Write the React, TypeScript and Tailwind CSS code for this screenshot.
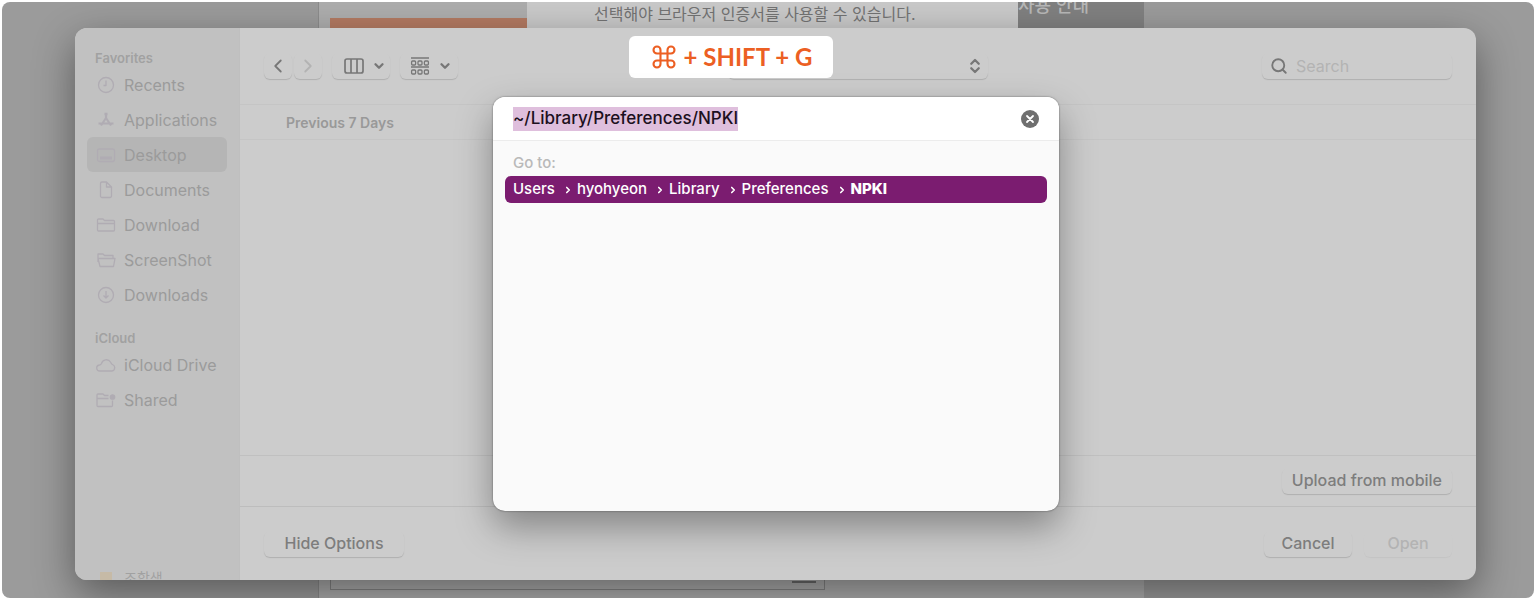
import { useState } from "react";
import type { ReactNode } from "react";
import { ChevronDown, ChevronLeft, ChevronRight, ChevronsUpDown, Search } from "lucide-react";

const FAVORITES = [
  { name: "Recents", icon: "clock" },
  { name: "Applications", icon: "apps" },
  { name: "Desktop", icon: "desktop" },
  { name: "Documents", icon: "document" },
  { name: "Download", icon: "folder" },
  { name: "ScreenShot", icon: "openFolder" },
  { name: "Downloads", icon: "download" },
];

const ICLOUD = [
  { name: "iCloud Drive", icon: "cloud" },
  { name: "Shared", icon: "shared" },
];

const PATH = ["Users", "hyohyeon", "Library", "Preferences", "NPKI"];

const CONTROL = "h-[26px] rounded-md shadow-[0_1px_1px_rgba(0,0,0,0.14)]";

const ICONS: Record<string, ReactNode> = {
  clock: (
    <>
      <circle cx="10" cy="10" r="7.5" />
      <path d="M10 5.5V10.5H7.5" />
    </>
  ),
  apps: (
    <>
      <path d="M10 4v4M10 8L5 15.5M10 8l5 7.5M2.5 13.5h15" strokeWidth="2.2" />
      <path d="M8.5 4h3" strokeWidth="2.5" />
    </>
  ),
  desktop: (
    <>
      <rect x="1.5" y="4" width="17" height="12.5" rx="2" />
      <path d="M4 13h12" strokeWidth="3" />
    </>
  ),
  document: <path d="M4.5 3.5a1.500 1.500 0 011.500-1.500h4.500l5 5v9a1.500 1.500 0 01-1.500 1.500h-8a1.500 1.500 0 01-1.500-1.500zM10.500 2v5h5" />,
  folder: <path d="M1.500 5a1 1 0 011-1h4.500l1.500 1.500h9a1 1 0 011 1v8.500a1 1 0 01-1 1h-15a1 1 0 01-1-1zM1.500 8.500h17" />,
  openFolder: <path d="M2 12V4h5l1.500 1.500h8.500v3M2 8.500h17l-1.500 8h-13.500z" />,
  download: (
    <>
      <circle cx="10" cy="10" r="7.5" />
      <path d="M10 6v7M7.500 10.500L10 13l2.500-2.500" />
    </>
  ),
  cloud: <path d="M4 16a3 3 0 01-.5-6c1-.2 1.500-.5 2-1.500a5 5 0 019-1.500c.7 1 .7 2 2 2.500A3.400 3.400 0 0116 16z" />,
  shared: (
    <>
      <path d="M12.500 5.500h-4l-1.500-1.500h-5a1 1 0 00-1 1v10.500a1 1 0 001 1h13.500a1 1 0 001-1v-5M1 8.500h11.500" />
      <circle cx="16.500" cy="7" r="2.200" fill="currentColor" />
    </>
  ),
};

function SideIcon({ name }: { name: string }) {
  return (
    <svg className="w-5 h-5 shrink-0 text-[#b0acb3]" viewBox="0 0 20 20" fill="none" stroke="currentColor" strokeWidth="1.3" strokeLinejoin="round">
      {ICONS[name]}
    </svg>
  );
}

function SideList({ title, items, active, onPick }: {
  title: string;
  items: { name: string; icon: string }[];
  active: string;
  onPick: (name: string) => void;
}) {
  return (
    <section>
      <h2 className="px-2 h-[19px] text-[13px] leading-5 font-semibold text-[#a1a1a1]">{title}</h2>
      <ul>
        {items.map((item) => (
          <li key={item.name}>
            <button
              onClick={() => onPick(item.name)}
              className={`flex items-center gap-2 w-full h-[35px] pl-[9px] rounded-md text-base text-[#9b9b9b] ${
                active === item.name ? "bg-[#b5b5b5]" : ""
              }`}
            >
              <SideIcon name={item.icon} />
              {item.name}
            </button>
          </li>
        ))}
      </ul>
    </section>
  );
}

// Page that sits behind the file dialog; only its edges are visible
function Backdrop() {
  return (
    <div className="absolute inset-0 flex bg-[#9b9b9b]">
      <div className="w-[316px] shrink-0" />
      <div className="flex flex-col justify-between w-[826px] shrink-0 bg-[#adadad] border-l border-[#8c8c8c]">
        <div className="flex h-7">
          <div className="flex items-end w-[208px] h-[26px] pl-[11px]">
            <div className="w-full h-2.5 bg-[#b37a62]" />
          </div>
          <div className="w-[491px] h-[26px] pl-[67px] bg-[#c9c9c9] text-base leading-6 text-[#737373] whitespace-nowrap">
            <p>선택해야 브라우저 인증서를 사용할 수 있습니다.</p>
          </div>
          <div className="flex-1 h-7 overflow-hidden bg-[#808080] text-lg leading-4 font-medium text-[#b8b8b8]">
            <p className="-mt-1">사용 안내</p>
          </div>
        </div>
        <div className="h-7 pl-[11px] pb-2">
          <div className="flex justify-end w-[495px] h-full pt-2.5 pr-2 border border-[#858585]">
            <div className="w-6 h-0.5 bg-[#6b6b6b]" />
          </div>
        </div>
      </div>
    </div>
  );
}

export default function App() {
  const [active, setActive] = useState("Desktop");
  const [path, setPath] = useState("~/Library/Preferences/NPKI");
  const [query, setQuery] = useState("");

  return (
    <main className="h-screen min-h-[600px] p-0.5 bg-white font-['Inter','Noto_Sans_CJK_KR',sans-serif]">
      <div className="relative h-full pt-[26px] pb-[18px] pl-[73px] pr-[58px] rounded-lg overflow-hidden">
        <Backdrop />

        {/* File dialog */}
        <div className="relative flex h-full rounded-xl overflow-hidden bg-[#cccccc] shadow-[0_14px_40px_rgba(0,0,0,0.42)]">
          <aside className="flex flex-col w-[165px] shrink-0 pt-5 px-3 bg-[#c1c1c1] border-r border-[#bfbfbf]">
            <div className="flex-1 space-y-4">
              <SideList title="Favorites" items={FAVORITES} active={active} onPick={setActive} />
              <SideList title="iCloud" items={ICLOUD} active={active} onPick={setActive} />
            </div>
            <div className="flex gap-2 h-3 pl-[9px] overflow-hidden text-sm leading-5 text-[#a1a1a1]">
              <span className="w-5 flex justify-center"><span className="mt-1 w-3 h-3 bg-[#c6baa6]" /></span>
              조합샘
            </div>
          </aside>

          <div className="flex-1 flex flex-col min-w-0">
            <div className="flex items-center h-[76px] px-6 text-[#777]">
              <button aria-label="Back" className={`flex items-center justify-center w-7 ${CONTROL}`}>
                <ChevronLeft size={22} />
              </button>
              <button aria-label="Forward" className={`flex items-center justify-center w-7 ml-0.5 text-[#b3b3b3] ${CONTROL}`}>
                <ChevronRight size={22} />
              </button>
              <button aria-label="Column view" className={`flex items-center gap-2 w-[58px] ml-2.5 pl-3 ${CONTROL}`}>
                <svg className="w-5 h-4" viewBox="0 0 20 16" fill="none" stroke="currentColor" strokeWidth="1.700">
                  <rect x="1" y="1" width="18" height="14" rx="2" />
                  <path d="M7 1v14M13 1v14" />
                </svg>
                <ChevronDown size={14} strokeWidth={4} />
              </button>
              <button aria-label="Group items" className={`flex items-center gap-2 w-[58px] ml-2.5 pl-2.5 ${CONTROL}`}>
                <svg className="w-5 h-5" viewBox="0 0 20 20" fill="none" stroke="currentColor" strokeWidth="1.300">
                  <path d="M1 2h18M1 11h18" />
                  <rect x="1.600" y="5" width="4" height="4" rx="1" />
                  <rect x="8" y="5" width="4" height="4" rx="1" />
                  <rect x="14.400" y="5" width="4" height="4" rx="1" />
                  <rect x="1.600" y="14" width="4" height="4" rx="1" />
                  <rect x="8" y="14" width="4" height="4" rx="1" />
                  <rect x="14.400" y="14" width="4" height="4" rx="1" />
                </svg>
                <ChevronDown size={14} strokeWidth={4} />
              </button>
              <button aria-label="Location" className={`flex items-center justify-end w-[260px] ml-[270px] pr-1 ${CONTROL}`}>
                <ChevronsUpDown size={18} strokeWidth={3} />
              </button>
              <label className={`flex items-center gap-2 w-[190px] ml-auto px-2 ${CONTROL}`}>
                <Search size={18} strokeWidth={2.5} className="shrink-0" />
                <input
                  aria-label="Search"
                  className="w-full min-w-0 bg-transparent text-base outline-none placeholder:text-[#b3b3b3]"
                  placeholder="Search"
                  value={query}
                  onChange={(e) => setQuery(e.target.value)}
                />
              </label>
            </div>
            <h3 className="h-9 px-[46px] border-y border-[#c5c5c5] text-sm leading-9 font-semibold text-[#999]">Previous 7 Days</h3>
            <div className="flex-1" />
            <div className="flex items-center justify-end h-[51px] px-6 border-t border-[#c0c0c0]">
              <button className={`px-2.5 pb-0.5 text-base font-medium text-[#7d7d7d] ${CONTROL}`}>Upload from mobile</button>
            </div>
            <div className="flex items-center gap-3 h-[74px] px-6 border-t border-[#bdbdbd] text-base font-medium text-[#7d7d7d]">
              <button className={`w-[140px] pb-0.5 mr-auto ${CONTROL}`}>Hide Options</button>
              <button className={`w-[88px] pb-0.5 ${CONTROL}`}>Cancel</button>
              <button disabled className="w-[88px] h-[26px] pb-0.5 rounded-md shadow-[0_1px_1px_rgba(0,0,0,0.04)] text-[#b3b3b3]">Open</button>
            </div>
          </div>
        </div>

        {/* Shortcut hint */}
        <div className="absolute top-[34px] left-1/2 -ml-[139px] flex items-center justify-center gap-1.5 w-[204px] h-[42px] rounded-md bg-white text-[#ec5f23] font-['Lato',sans-serif] text-2xl font-bold">
          <svg className="w-7 h-7" viewBox="0 0 24 24" fill="none" stroke="currentColor" strokeWidth="1.800" aria-label="Command">
            <path d="M15 6v12a3 3 0 1 0 3-3H6a3 3 0 1 0 3 3V6a3 3 0 1 0-3 3h12a3 3 0 1 0-3-3" />
          </svg>
          + SHIFT + G
        </div>

        {/* Go to folder sheet */}
        <div className="absolute top-[95px] left-1/2 -ml-[275px] w-[566px] h-[414px] rounded-xl overflow-hidden bg-[#fafafa] shadow-[0_16px_36px_rgba(0,0,0,0.35),0_0_2px_rgba(0,0,0,0.5)]">
          <div className="flex items-center justify-between h-11 px-5 bg-white border-b border-[#ececec]">
            <input
              aria-label="Folder path"
              className="field-sizing-content h-6 bg-[#dfbfdd] text-[17px] font-medium text-[#1c1020] outline-none"
              value={path}
              onChange={(e) => setPath(e.target.value)}
            />
            <button aria-label="Clear" onClick={() => setPath("")}>
              <svg className="w-[18px] h-[18px]" viewBox="0 0 18 18">
                <circle cx="9" cy="9" r="9" fill="#6f6f6f" />
                <path d="M6 6l6 6M12 6l-6 6" stroke="#fff" strokeWidth="1.800" strokeLinecap="round" />
              </svg>
            </button>
          </div>
          <div className="px-3 pt-2">
            <p className="px-2 h-[27px] text-[15px] leading-7 font-medium text-[#b9b9b9]">Go to:</p>
            <button className="flex items-center gap-2 w-full h-[27px] px-2 rounded-md bg-[#7b1c70] text-white text-[15px] font-medium">
              {PATH.map((part, i) => (
                <span key={part} className={`flex items-center gap-1 ${i === PATH.length - 1 ? "font-extrabold" : ""}`}>
                  {i > 0 && <ChevronRight size={10} strokeWidth={4} />}
                  {part}
                </span>
              ))}
            </button>
          </div>
        </div>
      </div>
    </main>
  );
}
